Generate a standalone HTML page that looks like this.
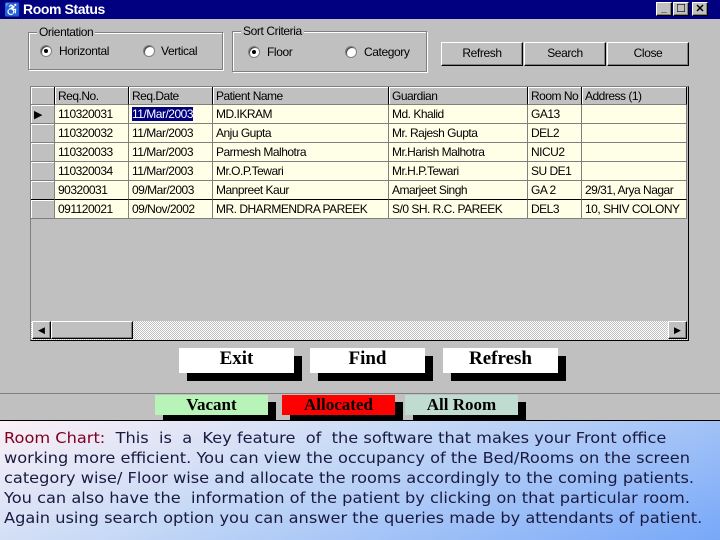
<!DOCTYPE html>
<html><head><meta charset="utf-8"><style>
*{margin:0;padding:0;box-sizing:border-box}
body{width:720px;height:540px;overflow:hidden;background:#c0c0c0;font-family:"Liberation Sans",sans-serif;position:relative}
.a{position:absolute}
.t{font-size:12px;letter-spacing:-0.4px;color:#000;white-space:nowrap}
.fr{border:1px solid #808080;box-shadow:1px 1px 0 #fff,inset 1px 1px 0 #fff}
.lg{background:#c0c0c0;padding:0 2px;top:-8px;left:8px}
.rd{width:12px;height:12px;border-radius:50%;background:#fff;border:1px solid #808080;box-shadow:inset 1px 1px 0 #404040}
.rd.on::after{content:"";position:absolute;left:3px;top:3px;width:4px;height:4px;border-radius:50%;background:#000}
.btn{background:#c0c0c0;border:1px solid;border-color:#fff #000 #000 #fff;box-shadow:inset -1px -1px 0 #808080;text-align:center;line-height:21px}
.cell{position:absolute;height:19px;border-right:1px solid #808080;border-bottom:1px solid #808080;padding-left:3px;line-height:18px;font-size:12px;letter-spacing:-0.5px;overflow:hidden;white-space:nowrap}
.bb{font-family:"Liberation Serif",serif;font-weight:bold;font-size:19px;text-align:center}
</style></head><body>
<div class="a" style="left:0;top:0;width:720px;height:19px;background:#000080"></div>
<div class="a t" style="left:4px;top:2px;color:#fff;font-size:13px">♿</div>
<div class="a t" style="left:23px;top:1px;color:#fff;font-weight:bold;font-size:14px">Room Status</div>
<div class="a btn" style="left:656px;top:2px;width:16px;height:14px;line-height:12px;font-size:10px;font-weight:bold">_</div>
<div class="a btn" style="left:673px;top:2px;width:16px;height:14px;line-height:12px;font-size:11px">☐</div>
<div class="a btn" style="left:692px;top:2px;width:16px;height:14px;line-height:12px;font-size:11px;font-weight:bold">✕</div>

<div class="a fr" style="left:28px;top:32px;width:195px;height:38px"><div class="a t lg">Orientation</div></div>
<div class="a rd on" style="left:40px;top:45px"></div><div class="a t" style="left:59px;top:44px">Horizontal</div>
<div class="a rd" style="left:143px;top:45px"></div><div class="a t" style="left:161px;top:44px">Vertical</div>
<div class="a fr" style="left:232px;top:31px;width:195px;height:41px"><div class="a t lg">Sort Criteria</div></div>
<div class="a rd on" style="left:248px;top:46px"></div><div class="a t" style="left:267px;top:45px">Floor</div>
<div class="a rd" style="left:345px;top:46px"></div><div class="a t" style="left:364px;top:45px">Category</div>
<div class="a btn t" style="left:441px;top:42px;width:82px;height:24px">Refresh</div>
<div class="a btn t" style="left:524px;top:42px;width:82px;height:24px">Search</div>
<div class="a btn t" style="left:607px;top:42px;width:82px;height:24px">Close</div>

<div class="a" style="left:30px;top:86px;width:659px;height:255px;border:1px solid;border-color:#808080 #000 #000 #808080;background:#c0c0c0"></div>
<div id="g" class="a" style="left:31px;top:87px"></div>
<div class="a" style="left:31px;top:321px;width:656px;height:19px;background:repeating-conic-gradient(#fff 0 25%,#c0c0c0 0 50%) 0 0/2px 2px"></div>
<div class="a btn" style="left:32px;top:321px;width:19px;height:18px;line-height:16px;font-size:9px">◀</div>
<div class="a btn" style="left:51px;top:321px;width:82px;height:18px"></div>
<div class="a btn" style="left:668px;top:321px;width:19px;height:18px;line-height:16px;font-size:9px">▶</div>
<div class="a" style="left:0;top:393px;width:720px;height:1px;background:#808080"></div>

<div class="a" style="left:187px;top:356px;width:115px;height:25px;background:#000"></div>
<div class="a bb" style="left:179px;top:348px;width:115px;height:25px;background:#fff">Exit</div>
<div class="a" style="left:318px;top:356px;width:115px;height:25px;background:#000"></div>
<div class="a bb" style="left:310px;top:348px;width:115px;height:25px;background:#fff">Find</div>
<div class="a" style="left:451px;top:356px;width:115px;height:25px;background:#000"></div>
<div class="a bb" style="left:443px;top:348px;width:115px;height:25px;background:#fff">Refresh</div>

<div class="a" style="left:163px;top:402px;width:113px;height:18px;background:#000"></div>
<div class="a bb" style="left:155px;top:395px;width:113px;height:20px;line-height:19px;font-size:17px;background:#b8f4b8">Vacant</div>
<div class="a" style="left:290px;top:402px;width:113px;height:18px;background:#000"></div>
<div class="a bb" style="left:282px;top:395px;width:113px;height:20px;line-height:19px;font-size:17px;background:#f00">Allocated</div>
<div class="a" style="left:413px;top:402px;width:113px;height:18px;background:#000"></div>
<div class="a bb" style="left:405px;top:395px;width:113px;height:20px;line-height:19px;font-size:17px;background:#c0dcd0">All Room</div>

<div class="a" style="left:0;top:420px;width:720px;height:120px;border-top:1px solid #000;background:linear-gradient(160deg,#fbf0f6 0%,#c8daf6 40%,#78a8f8 100%)"></div>
<div class="a" style="left:4px;top:428px;width:640px;font-family:'DejaVu Sans',sans-serif;font-size:15px;line-height:20px;color:#1a1a40;white-space:nowrap;transform:scaleX(1.08);transform-origin:0 0">
<span style="color:#800020">Room Chart:</span>&nbsp; This&nbsp; is&nbsp; a&nbsp; Key feature&nbsp; of&nbsp; the software that makes your Front office<br>working more efficient. You can view the occupancy of the Bed/Rooms on the screen<br>category wise/ Floor wise and allocate the rooms accordingly to the coming patients.<br>You can also have the&nbsp; information of the patient by clicking on that particular room.<br>Again using search option you can answer the queries made by attendants of patient.</div>
<script>
var cols=[24,74,84,176,139,54,104],x=[0];for(var i=0;i<cols.length;i++)x.push(x[i]+cols[i]);
var hd=["","Req.No.","Req.Date","Patient Name","Guardian","Room No","Address (1)"];
var rows=[["110320031","11/Mar/2003","MD.IKRAM","Md. Khalid","GA13",""],["110320032","11/Mar/2003","Anju Gupta","Mr. Rajesh Gupta","DEL2",""],["110320033","11/Mar/2003","Parmesh Malhotra","Mr.Harish Malhotra","NICU2",""],["110320034","11/Mar/2003","Mr.O.P.Tewari","Mr.H.P.Tewari","SU DE1",""],["90320031","09/Mar/2003","Manpreet Kaur","Amarjeet Singh","GA 2","29/31, Arya Nagar"],["091120021","09/Nov/2002","MR. DHARMENDRA PAREEK","S/0 SH. R.C. PAREEK","DEL3","10, SHIV COLONY"]];
var h="";
for(var c=0;c<7;c++){var w=c==6?656-x[6]:cols[c];h+='<div class="cell" style="left:'+x[c]+'px;top:0;width:'+w+'px;height:18px;background:#c0c0c0;border-right-color:#000;box-shadow:inset 1px 1px 0 #fff">'+hd[c]+'</div>';}
for(var r=0;r<6;r++){var t=18+r*19;
h+='<div class="cell" style="left:0;top:'+t+'px;width:24px;background:#c0c0c0;box-shadow:inset 1px 1px 0 #fff;border-bottom-color:'+(r==4?'#000':'#808080')+'">'+(r==0?'<span style="font-size:11px">▶</span>':'')+'</div>';
for(var c=1;c<7;c++){var w=c==6?656-x[6]:cols[c];var v=rows[r][c-1];if(r==0&&c==2)v='<span style="background:#000080;color:#fff">'+v+'</span>';
h+='<div class="cell" style="left:'+x[c]+'px;top:'+t+'px;width:'+w+'px;background:#ffffe8;border-bottom-color:'+(r==4?'#000':'#808080')+'">'+v+'</div>';}}
document.getElementById("g").innerHTML=h;
</script>
</body></html>
